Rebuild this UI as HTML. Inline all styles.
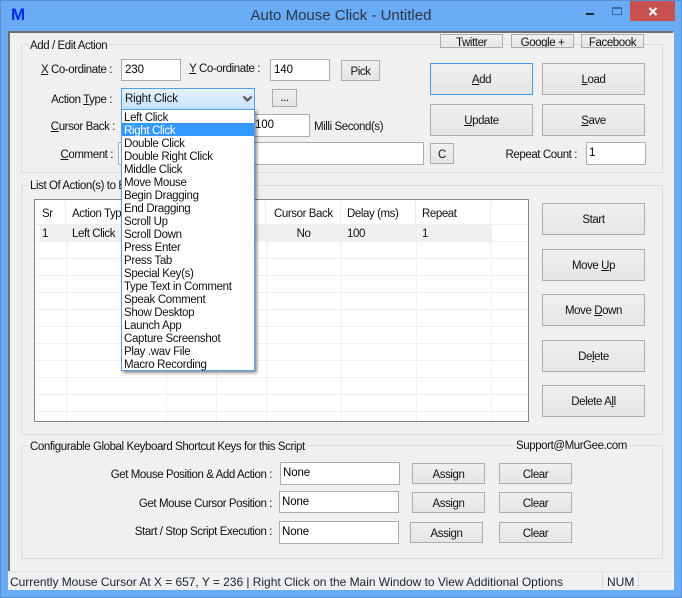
<!DOCTYPE html>
<html><head><meta charset="utf-8"><style>
*{box-sizing:border-box}
html,body{margin:0;padding:0;width:682px;height:598px;overflow:hidden;background:#6aabf6}
body{position:relative;font-family:"Liberation Sans",sans-serif;font-size:11.5px;letter-spacing:-.42px;color:#111}
div{position:absolute;white-space:nowrap}
.c{background:#f0f0f0}
.g{border:1px solid #dcdcdc}
.l{background:#f0f0f0;padding:0 2px 0 2px;height:14px;line-height:16px}
.i{background:#fff;border:1px solid #acacac;padding:0 0 0 8px;line-height:21px;color:#000;font-size:11.5px;letter-spacing:-.1px}
.b{background:linear-gradient(#f0f0f0,#e5e5e5);border:1px solid #acacac;text-align:center;color:#111;padding-top:1px}
.t{text-align:right;height:16px;line-height:18px}
.d div{left:0;width:132px;height:13px;line-height:17px;padding-left:2px;color:#111;letter-spacing:-.33px}
.h{background:#e9eef5}
.gl{background:#f0f0f0}
</style></head><body>
<div style="left:0;top:0;width:682px;height:598px;border:1px solid #5b8fcf"></div>
<div style="left:11px;top:3px;font:bold 17px/24px 'Liberation Sans',sans-serif;letter-spacing:0;color:#0a2ae8">M</div>
<div style="left:0;top:6px;width:682px;text-align:center;font-size:15px;letter-spacing:0;line-height:20px;color:#2a3646">Auto Mouse Click - Untitled</div>
<div style="left:586px;top:13px;width:8px;height:2px;background:#22282f"></div>
<div style="left:612px;top:7px;width:10px;height:8px;border:1px solid #3d6a9e;border-top-width:2px"></div>
<div style="left:630px;top:1px;width:45px;height:20px;background:#c75050"></div>
<svg style="position:absolute;left:648px;top:7px" width="10" height="9" viewBox="0 0 10 9"><path d="M1.5 1L8.5 8M8.5 1L1.5 8" stroke="#fff" stroke-width="2" fill="none"/></svg>

<div class="c" style="left:8px;top:31px;width:666px;height:540px;border-top:2px solid #6e6e6e;border-left:2px solid #6e6e6e;border-right:1px solid #f4f4f4"></div>

<div class="g" style="left:21px;top:44px;width:642px;height:129px"></div>
<div class="g" style="left:21px;top:185px;width:642px;height:250px"></div>
<div class="g" style="left:21px;top:445px;width:642px;height:114px"></div>
<div class="l" style="left:28px;top:38px">Add / Edit Action</div>
<div class="l" style="left:28px;top:178px">List Of Action(s) to Execute</div>
<div class="l" style="left:28px;top:439px">Configurable Global Keyboard Shortcut Keys for this Script</div>
<div class="l" style="left:514px;top:438px">Support@MurGee.com</div>

<div class="b" style="left:440px;top:34px;width:63px;height:14px;line-height:15px;overflow:hidden">Twitter</div>
<div class="b" style="left:511px;top:34px;width:63px;height:14px;line-height:15px;overflow:hidden">Google +</div>
<div class="b" style="left:581px;top:34px;width:63px;height:14px;line-height:15px;overflow:hidden">Facebook</div>

<div class="t" style="left:20px;top:61px;width:92px"><u>X</u> Co-ordinate :</div>
<div class="i" style="left:121px;top:59px;width:60px;height:22px;padding-left:3px">230</div>
<div class="t" style="left:170px;top:60px;width:90px"><u>Y</u> Co-ordinate :</div>
<div class="i" style="left:270px;top:59px;width:60px;height:22px;padding-left:3px">140</div>
<div class="b" style="left:341px;top:60px;width:39px;height:21px;line-height:20px">Pick</div>

<div class="t" style="left:20px;top:91px;width:92px">Action <u>T</u>ype :</div>
<div class="b" style="left:272px;top:89px;width:25px;height:18px;line-height:15px">...</div>

<div class="t" style="left:20px;top:118px;width:95px"><u>C</u>ursor Back :</div>
<div class="i" style="left:240px;top:114px;width:70px;height:23px;padding-left:14px;line-height:20px">100</div>
<div style="left:314px;top:118px;line-height:18px">Milli Second(s)</div>

<div class="t" style="left:20px;top:146px;width:93px"><u>C</u>omment :</div>
<div class="i" style="left:118px;top:142px;width:306px;height:23px"></div>
<div class="b" style="left:430px;top:143px;width:24px;height:21px;line-height:20px">C</div>
<div class="t" style="left:480px;top:146px;width:97px">Repeat Count :</div>
<div class="i" style="left:586px;top:142px;width:60px;height:23px;padding-left:2px;line-height:20px">1</div>

<div class="b" style="left:430px;top:63px;width:103px;height:32px;line-height:30px;border-color:#3c9bea"><u>A</u>dd</div>
<div class="b" style="left:542px;top:63px;width:103px;height:32px;line-height:30px"><u>L</u>oad</div>
<div class="b" style="left:430px;top:104px;width:103px;height:32px;line-height:30px"><u>U</u>pdate</div>
<div class="b" style="left:542px;top:104px;width:103px;height:32px;line-height:30px"><u>S</u>ave</div>

<div style="left:34px;top:199px;width:495px;height:223px;background:#fff;border:1px solid #828790"></div>
<div class="gl" style="left:35px;top:241px;width:493px;height:1px"></div>
<div class="gl" style="left:35px;top:258px;width:493px;height:1px"></div>
<div class="gl" style="left:35px;top:275px;width:493px;height:1px"></div>
<div class="gl" style="left:35px;top:292px;width:493px;height:1px"></div>
<div class="gl" style="left:35px;top:309px;width:493px;height:1px"></div>
<div class="gl" style="left:35px;top:326px;width:493px;height:1px"></div>
<div class="gl" style="left:35px;top:343px;width:493px;height:1px"></div>
<div class="gl" style="left:35px;top:360px;width:493px;height:1px"></div>
<div class="gl" style="left:35px;top:377px;width:493px;height:1px"></div>
<div class="gl" style="left:35px;top:394px;width:493px;height:1px"></div>
<div class="gl" style="left:35px;top:411px;width:493px;height:1px"></div>
<div style="left:40px;top:225px;width:452px;height:17px;background:#f0f0f0"></div>
<div class="gl" style="left:66px;top:225px;width:1px;height:196px"></div>
<div class="gl" style="left:166px;top:225px;width:1px;height:196px"></div>
<div class="gl" style="left:216px;top:225px;width:1px;height:196px"></div>
<div class="gl" style="left:266px;top:225px;width:1px;height:196px"></div>
<div class="gl" style="left:341px;top:225px;width:1px;height:196px"></div>
<div class="gl" style="left:416px;top:225px;width:1px;height:196px"></div>
<div class="gl" style="left:491px;top:225px;width:1px;height:196px"></div>
<div style="left:35px;top:224px;width:493px;height:1px;background:#e6effa"></div>
<div class="h" style="left:65px;top:201px;width:1px;height:23px"></div>
<div class="h" style="left:265px;top:201px;width:1px;height:23px"></div>
<div class="h" style="left:340px;top:201px;width:1px;height:23px"></div>
<div class="h" style="left:415px;top:201px;width:1px;height:23px"></div>
<div class="h" style="left:490px;top:201px;width:1px;height:23px"></div>
<div style="left:42px;top:205px;line-height:18px">Sr</div>
<div style="left:72px;top:205px;line-height:18px">Action Type</div>
<div style="left:274px;top:205px;line-height:18px">Cursor Back</div>
<div style="left:347px;top:205px;line-height:18px">Delay (ms)</div>
<div style="left:422px;top:205px;line-height:18px">Repeat</div>
<div style="left:42px;top:226px;line-height:16px">1</div>
<div style="left:72px;top:226px;line-height:16px">Left Click</div>
<div style="left:266px;top:226px;width:75px;text-align:center;line-height:16px">No</div>
<div style="left:347px;top:226px;line-height:16px">100</div>
<div style="left:422px;top:226px;line-height:16px">1</div>

<div class="b" style="left:542px;top:203px;width:103px;height:32px;line-height:30px">Start</div>
<div class="b" style="left:542px;top:249px;width:103px;height:32px;line-height:30px">Move <u>U</u>p</div>
<div class="b" style="left:542px;top:294px;width:103px;height:32px;line-height:30px">Move <u>D</u>own</div>
<div class="b" style="left:542px;top:340px;width:103px;height:32px;line-height:30px">De<u>l</u>ete</div>
<div class="b" style="left:542px;top:385px;width:103px;height:32px;line-height:30px">Delete A<u>l</u>l</div>

<div class="t" style="left:60px;top:466px;width:212px">Get Mouse Position &amp; Add Action :</div>
<div class="t" style="left:60px;top:495px;width:212px">Get Mouse Cursor Position :</div>
<div class="t" style="left:60px;top:523px;width:212px">Start / Stop Script Execution :</div>
<div class="i" style="left:280px;top:462px;width:120px;height:23px;padding-left:2px;line-height:20px">None</div>
<div class="i" style="left:279px;top:491px;width:120px;height:22px;padding-left:2px;line-height:20px">None</div>
<div class="i" style="left:279px;top:521px;width:120px;height:23px;padding-left:2px;line-height:21px">None</div>
<div class="b" style="left:412px;top:463px;width:73px;height:21px;line-height:20px">Assign</div>
<div class="b" style="left:412px;top:492px;width:73px;height:21px;line-height:20px">Assign</div>
<div class="b" style="left:410px;top:522px;width:73px;height:21px;line-height:20px">Assign</div>
<div class="b" style="left:499px;top:463px;width:73px;height:21px;line-height:20px">Clear</div>
<div class="b" style="left:499px;top:492px;width:73px;height:21px;line-height:20px">Clear</div>
<div class="b" style="left:499px;top:522px;width:73px;height:21px;line-height:20px">Clear</div>

<div style="left:8px;top:571px;width:666px;height:19px;background:#f0f0f0;border-top:1px solid #e4e4e4;border-right:1px solid #fff"></div>
<div style="left:10px;top:574px;line-height:17px;font-size:12px;letter-spacing:-.03px;color:#1a2233">Currently Mouse Cursor At X = 657, Y = 236 | Right Click on the Main Window to View Additional Options</div>
<div style="left:607px;top:574px;line-height:17px;font-size:12px;letter-spacing:0;color:#1a2233">NUM</div>
<div style="left:602px;top:572px;width:1px;height:17px;background:#dcdcdc"></div>
<div style="left:638px;top:572px;width:1px;height:17px;background:#dcdcdc"></div>

<div style="left:121px;top:88px;width:134px;height:22px;border:1px solid #569de5;background:linear-gradient(#e6f2fd,#c4e1fc);padding-left:3px;line-height:21px;letter-spacing:-.2px">Right Click</div>
<svg style="position:absolute;left:242px;top:95px" width="11" height="8" viewBox="0 0 11 8"><path d="M1.5 1.5L5.5 5.5L9.5 1.5" stroke="#555" stroke-width="2.2" fill="none"/></svg>
<div class="d" style="left:121px;top:109px;width:134px;height:262px;background:#fff;border:1px solid #569de5;box-shadow:2px 2px 3px rgba(0,0,0,.45)">
<div style="top:0">Left Click</div>
<div style="top:13px;background:#3399ff;color:#fff">Right Click</div>
<div style="top:26px">Double Click</div>
<div style="top:39px">Double Right Click</div>
<div style="top:52px">Middle Click</div>
<div style="top:65px">Move Mouse</div>
<div style="top:78px">Begin Dragging</div>
<div style="top:91px">End Dragging</div>
<div style="top:104px">Scroll Up</div>
<div style="top:117px">Scroll Down</div>
<div style="top:130px">Press Enter</div>
<div style="top:143px">Press Tab</div>
<div style="top:156px">Special Key(s)</div>
<div style="top:169px">Type Text in Comment</div>
<div style="top:182px">Speak Comment</div>
<div style="top:195px">Show Desktop</div>
<div style="top:208px">Launch App</div>
<div style="top:221px">Capture Screenshot</div>
<div style="top:234px">Play .wav File</div>
<div style="top:247px">Macro Recording</div>
</div>
</body></html>
